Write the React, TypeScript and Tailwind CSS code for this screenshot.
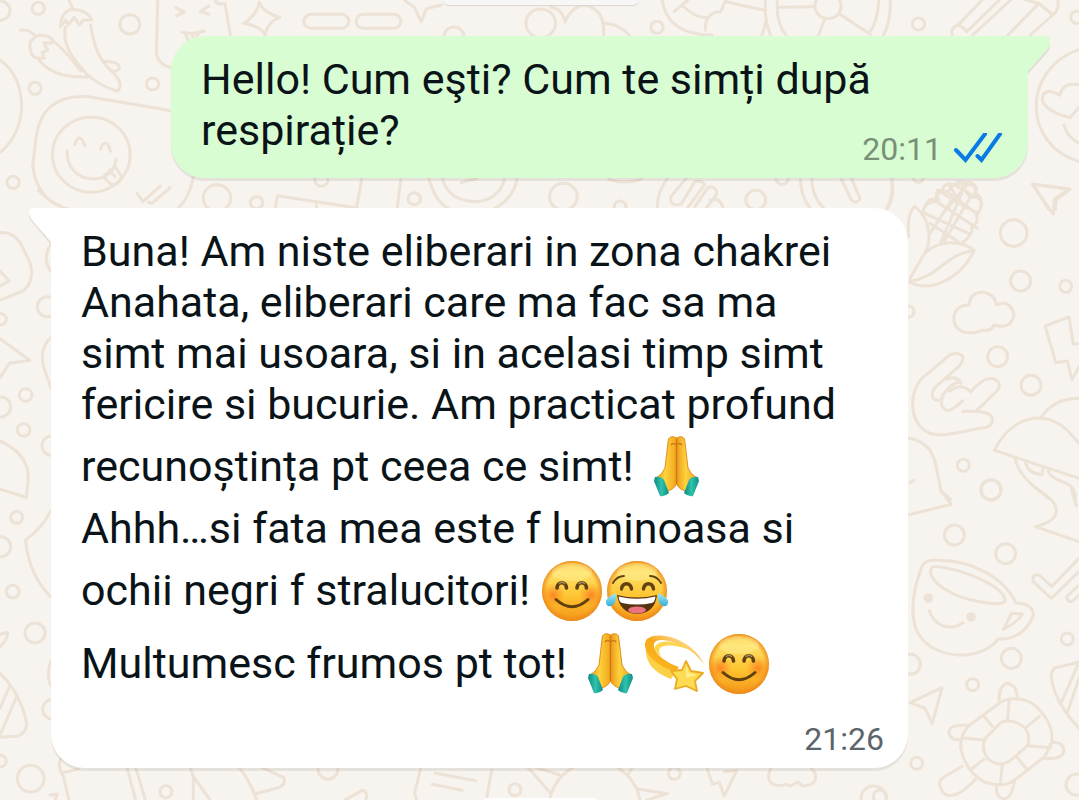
import type { ReactNode } from "react";

type EmojiProps = { label: string; children: ReactNode };

function Emoji({ label, children }: EmojiProps) {
  return (
    <svg role="img" aria-label={label} viewBox="0 0 65 62" className="inline-block h-[62px] w-[65px] align-[-17px]">
      {children}
    </svg>
  );
}

function Gradients() {
  return (
    <svg aria-hidden="true" className="absolute h-0 w-0">
      <defs>
        <linearGradient id="face" x1="0" y1="0" x2="0" y2="1">
          <stop offset="0" stopColor="#fbc63c" />
          <stop offset="0.2" stopColor="#fee168" />
          <stop offset="0.6" stopColor="#fdc32f" />
          <stop offset="1" stopColor="#f49518" />
        </linearGradient>
        <radialGradient id="rim">
          <stop offset="0.82" stopColor="#ee8a1c" stopOpacity="0" />
          <stop offset="1" stopColor="#ea861f" stopOpacity="0.85" />
        </radialGradient>
        <radialGradient id="blush">
          <stop offset="0" stopColor="#fb6b1c" stopOpacity="0.7" />
          <stop offset="1" stopColor="#fb7d1c" stopOpacity="0" />
        </radialGradient>
        <linearGradient id="hand" x1="0" y1="0" x2="1" y2="0">
          <stop offset="0" stopColor="#ee981c" />
          <stop offset="0.45" stopColor="#fdd33c" />
          <stop offset="1" stopColor="#f2a51c" />
        </linearGradient>
        <linearGradient id="cuff" x1="0" y1="0" x2="1" y2="0">
          <stop offset="0" stopColor="#0b8a83" />
          <stop offset="0.5" stopColor="#31c2ac" />
          <stop offset="1" stopColor="#0d8d86" />
        </linearGradient>
        <linearGradient id="trail" x1="0" y1="1" x2="1" y2="0">
          <stop offset="0" stopColor="#fbbb1e" />
          <stop offset="0.5" stopColor="#f8a91b" />
          <stop offset="1" stopColor="#fbd787" stopOpacity="0.4" />
        </linearGradient>
        <linearGradient id="tear" x1="0" y1="0" x2="0" y2="1">
          <stop offset="0" stopColor="#a8e8f4" />
          <stop offset="1" stopColor="#35afd9" />
        </linearGradient>
      </defs>
    </svg>
  );
}

function Face() {
  return (
    <>
      <circle cx="31" cy="31" r="30" fill="url(#face)" />
      <circle cx="31" cy="31" r="30" fill="url(#rim)" />
      <ellipse cx="31" cy="12" rx="20" ry="9" fill="#fff3a5" opacity="0.35" />
    </>
  );
}

function Smile() {
  return (
    <Emoji label="😊">
      <Face />
      <circle cx="12" cy="35" r="12" fill="url(#blush)" />
      <circle cx="50" cy="35" r="12" fill="url(#blush)" />
      <g fill="none" stroke="#614010" strokeLinecap="round">
        <path d="M16 28C16.500 21 25 21 25.500 28M36 28C36.500 21 45 21 45.500 28" strokeWidth="3.600" />
        <path d="M15 39.500Q31 54 47 39.500" strokeWidth="3" />
      </g>
      <path d="M18 24Q21 20.500 24 24M37.500 24Q41 20.500 44 24" fill="none" stroke="#a58b60" strokeWidth="1.500" />
    </Emoji>
  );
}

function Joy() {
  return (
    <Emoji label="😂">
      <Face />
      <g fill="none" stroke="#634211" strokeLinecap="round">
        <path d="M15.500 29C16.500 22 24.500 22 25.500 29M37.500 29C38.500 22 46.500 22 47.500 29" strokeWidth="3.400" />
        <path d="M7 23Q11 16 18 16M44 16Q51 16 55 23" strokeWidth="1.900" />
      </g>
      <path d="M11 35Q31 40 51 35Q49 53 31 54Q14 53 11 35Z" fill="#54330e" />
      <path d="M12.500 36.500Q31 41 49.500 36.500Q49 42 46 43Q31 46 16 43Q13 42 12.500 36.500Z" fill="#fff" />
      <ellipse cx="31" cy="50" rx="9" ry="3.500" fill="#ec7281" />
      <path d="M10 33Q11 44 5 46Q0 47 0 42Q0 37 10 33Z" fill="url(#tear)" />
      <path d="M52 33Q51 44 57 46Q62 47 62 42Q62 37 52 33Z" fill="url(#tear)" />
    </Emoji>
  );
}

function Pray() {
  return (
    <Emoji label="🙏">
      <path d="M32.500 2Q27 -1 24.500 3C23 14 22 24 21 32Q18 39 12 42L20 56Q30 54 32.500 48Z" fill="url(#hand)" stroke="#e08c1b" strokeWidth="1" />
      <path d="M32.500 2Q38 -1 40.500 3C42 14 43 24 44 32Q47 39 53 42L45 56Q35 54 32.500 48Z" fill="url(#hand)" stroke="#e08c1b" strokeWidth="1" />
      <path d="M32.500 3V48M27 9Q29 6 32.500 9Q36 6 38 9" fill="none" stroke="#ce7814" strokeWidth="1.500" />
      <path d="M11 41Q17 40 20 44L25 57Q21 61 16 60L10 45Z" fill="url(#cuff)" />
      <path d="M54 41Q48 40 45 44L40 57Q44 61 49 60L55 45Z" fill="url(#cuff)" />
    </Emoji>
  );
}

function Dizzy() {
  return (
    <Emoji label="💫">
      <path d="M28 46C10 39 2 29 3 15C7 22 15 31 32 40Z" fill="#fcd046" />
      <path d="M32 39C8 31 -3 14 4 6C15 -3 49 6 61 31C46 11 19 3 12 9C7 15 18 28 36 34Z" fill="url(#trail)" />
      <path d="M13 12C20 5 39 9 50 18C38 13 22 10 17 15Q15 18 18 23Q9 17 13 12Z" fill="#fbd54e" />
      <path d="M43 28L48 38L60 40L52 48L54 58L43 53L32 56L34 46L28 38L39 37Z" fill="#fddc54" stroke="#eda921" strokeWidth="1.800" strokeLinejoin="round" />
      <path d="M43 32L46 40L54 42L43 45Z" fill="#fff09a" opacity="0.8" />
    </Emoji>
  );
}

function Doodles() {
  return (
    <svg aria-hidden="true" className="absolute inset-0 h-full w-full fill-none stroke-[#ede2d6] stroke-3 *:[&_*]:[vector-effect:non-scaling-stroke]" strokeLinecap="round" strokeLinejoin="round">
      {/* Top left: peppers, popsicle, sparkles and a winking bubble */}
      <g transform="scale(.3444 .3333)">
        <g>
          <circle cx="0" cy="32" r="29" /><circle cx="111" cy="25" r="18" /><circle cx="377" cy="73" r="29" />
          <circle cx="102" cy="265" r="18" /><circle cx="443" cy="252" r="18" /><circle cx="38" cy="547" r="18" />
          <circle cx="630" cy="594" r="40" /><circle cx="745" cy="608" r="18" /><circle cx="1203" cy="596" r="18" />
          <circle cx="933" cy="540" r="19" /><circle cx="1318" cy="110" r="29" /><circle cx="1570" cy="70" r="43" />
          <path d="M60 91Q82 86 103 108M200 0L213 29M89 151Q78 119 115 105Q160 109 150 130L127 128L139 150L122 157L128 174L112 175Q90 170 89 151ZM112 178Q155 238 263 230M154 122Q190 152 235 213" />
          <path d="M175 80Q179 32 211 28Q257 32 266 60L241 61L231 75L215 52L198 75L191 61ZM190 82C178 132 213 180 258 229Q298 260 341 274Q361 250 326 216C278 173 271 118 263 75M304 184Q342 185 347 201Q344 217 326 212" />
          <path d="M458 0L454 162Q463 199 505 204M624 0Q629 16 653 10L669 105M511 23L535 37L513 47M606 18L582 34L607 43M528 97Q560 105 593 93M539 102L545 120M560 102V112M577 100L570 114" />
          <path d="M753 7Q765 39 813 52Q777 64 770 105Q755 77 707 70Q745 47 753 7ZM1176 2L1203 22L1223 65L1239 26L1282 15" />
          <rect x="882" y="43" width="131" height="42" rx="21" /><rect x="1034" y="43" width="130" height="42" rx="21" />
          <path d="M0 180Q63 228 63 322Q59 405 0 458M498 332L258 290Q123 280 105 410L95 500Q110 607 202 628M561 530Q552 590 515 628" />
          <circle cx="265" cy="464" r="113" />
          <path d="M217 434Q230 392 247 438M291 448Q308 407 321 454M195 453C190 555 332 565 336 477M300 531L333 498L353 530Q343 560 321 552ZM318 511L334 530M398 580L415 605L466 558M430 607L441 610L494 563" />
          <path d="M799 628L806 587L1038 624M919 614V628M1050 537L1036 620M1164 535L1153 628M1245 535Q1263 605 1306 628M1502 535Q1490 598 1432 628M1285 535C1300 625 1450 630 1465 535M1339 548L1385 535" />
        </g>
      </g>
      {/* Top right: heart, pizza wheel, pencil, loving face */}
      <g transform="translate(540) scale(.3441 .3333)">
        <g>
          <path d="M30 22Q63 23 73 66Q90 20 132 15Q190 30 185 105M190 70Q231 74 260 105M355 0Q370 105 500 105M390 35L430 0M415 18Q455 55 480 52M540 0L525 35Q480 35 480 90M540 5L650 30M658 60L645 105M655 0Q652 65 670 105M690 0Q685 70 715 105M1018 0Q1020 65 998 105M985 0Q980 70 955 100M690 22L796 20M828 55L810 105M870 42L960 103" />
          <circle cx="837" cy="18" r="38" /><circle cx="340" cy="82" r="18" /><circle cx="1100" cy="72" r="18" /><circle cx="1560" cy="52" r="18" />
          <path d="M1198 105Q1190 85 1215 75L1285 0M1215 75Q1230 80 1240 95L1335 0M1258 105L1368 0M1360 105L1450 10L1490 45L1425 105M1412 0L1450 10M1505 0Q1510 30 1490 45" />
          <path d="M1568 148C1400 205 1400 435 1568 485M1540 353C1490 340 1450 315 1462 285Q1475 264 1510 286Q1520 245 1568 255M1522 375Q1535 415 1568 430M1540 353L1568 320" />
          <circle cx="68" cy="590" r="40" /><circle cx="233" cy="620" r="17" /><circle cx="627" cy="600" r="29" /><circle cx="704" cy="535" r="18" /><circle cx="1099" cy="532" r="15" />
          <path d="M200 538Q250 555 295 537M370 535Q337 585 342 625M425 535L380 590Q375 620 410 613L450 545Q475 540 478 555L430 622M450 620L490 560Q517 560 512 585L485 622M495 600Q520 590 532 622M757 535Q757 590 785 625M790 535Q790 590 825 625M1022 535Q1032 590 1010 625M875 535L905 600Q920 615 930 595L905 535M1432 552L1540 568L1500 600L1498 628M1432 552L1478 628" />
          <path d="M1120 615Q1130 590 1160 600Q1140 570 1170 570Q1175 545 1205 555Q1220 535 1240 553Q1275 555 1265 580Q1290 590 1280 625M1155 570L1240 625M1205 555L1265 590M1240 555L1185 625M1210 590L1190 555" />
        </g>
      </g>
      {/* Right: corn, cloud, hand sign, lightning and mushroom */}
      <g transform="translate(880 180) scale(.3333)">
        <g>
          <circle cx="401" cy="159" r="40" /><circle cx="422" cy="303" r="30" /><circle cx="557" cy="319" r="18" /><circle cx="85" cy="395" r="17" />
          <circle cx="353" cy="530" r="30" /><circle cx="453" cy="616" r="30" /><circle cx="250" cy="856" r="18" /><circle cx="333" cy="929" r="30" />
          <path d="M457 13L567 27L523 58L520 103ZM36 0Q38 55 20 88M104 79Q80 100 86 170M104 79C151 115 157 180 134 220L90 295M134 220C175 180 240 178 283 211C245 290 160 340 90 308M90 304C180 290 190 225 283 211" />
          <path d="M128 98Q134 65 165 65Q170 30 204 35Q222 3 245 13Q275-5 290 25Q287 48 270 53Q302 45 305 75Q300 98 288 100Q300 125 275 143Q282 160 248 188M170 65L292 145M205 38L293 103M128 97L265 160M149 130L235 185M245 13L270 53M245 40L182 188M225 45L150 160M270 53L190 188" />
          <path d="M267 374Q271 338 308 336Q342 340 350 374Q390 358 402 402Q396 450 342 435Q332 456 306 450Q296 458 275 458C210 465 207 385 251 377Z" />
          <path d="M125 596L204 529Q230 510 249 530Q250 550 230 565L162 625Q150 650 165 660Q188 665 187 647L210 620Q239 600 243 610Q230 585 200 598M187 652Q178 680 199 691Q214 696 248 662M210 634Q240 606 272 635Q309 593 337 596Q367 604 354 630L287 694H249M287 694Q341 697 337 722Q333 745 303 744C188 769 155 774 126 745C87 705 90 638 125 596" />
          <path d="M597 492H580L567 411L495 438L528 548L562 543L576 599L597 560M343 811C397 705 494 690 559 748L597 790M343 811L597 895M480 717Q520 655 597 655M406 836Q410 873 460 918L510 958M437 850Q445 880 486 884L489 863M504 870Q506 890 545 904Q588 918 587 958M87 775Q154 785 168 858L183 932L212 958M90 908L102 901" />
        </g>
      </g>
      {/* Lower right: smiling cup, plane and turtle */}
      <g transform="translate(880 490) scale(.3333)">
        <g>
          <circle cx="333" cy="0" r="30" /><circle cx="223" cy="135" r="30" /><circle cx="377" cy="191" r="30" /><circle cx="562" cy="447" r="18" /><circle cx="394" cy="505" r="30" />
          <circle cx="91" cy="523" r="30" /><circle cx="278" cy="584" r="18" /><circle cx="110" cy="820" r="18" /><circle cx="590" cy="884" r="32" /><circle cx="0" cy="920" r="20" />
          <path d="M88 74L214 43L181 0M474 0C545 40 552 90 466 110L597 155M575 0L589 48M597 205L515 290L478 255Q455 250 460 275L514 325L597 245M597 285L560 320Q565 345 582 330L597 315" />
          <path d="M122 240Q130 210 160 211C275 205 375 267 408 339Q459 340 460 376Q430 450 355 447C303 514 170 510 121 440C87 395 95 315 122 240ZM153 235Q158 225 207 236C295 255 377 300 375 333C370 352 250 336 188 293Q145 263 153 235ZM370 418L395 370L427 372Q415 395 370 418ZM148 362C162 405 205 427 249 398" />
          <circle cx="145" cy="324" r="10" className="fill-[#ede2d6]" /><circle cx="273" cy="381" r="10" className="fill-[#ede2d6]" />
          <path d="M90 638L186 593L157 700L134 654ZM597 517L523 534Q511 550 514 565Q525 638 597 715M597 517L545 635M597 565L561 670" />
          <path d="M388 627C445 620 473 650 491 675Q520 710 515 755Q504 785 492 802L403 871Q370 895 313 876Q257 845 242 775Q241 733 266 708L357 640Q370 630 388 627ZM363 697Q398 685 434 712Q454 740 442 768L388 814Q355 833 324 807Q302 777 315 746ZM388 628L383 687M478 680L442 709M513 773L448 768M440 837L412 803M361 885L367 824M275 837L311 808M247 744L307 749M313 680L337 709M357 630Q358 582 385 580Q414 590 411 626M520 757Q552 758 552 785Q544 811 493 804M263 706Q205 702 207 730Q215 755 245 747M246 829L191 862Q165 880 195 913Q230 930 286 868M350 890Q345 920 372 927Q396 924 403 875" />
        </g>
      </g>
      {/* Left edge */}
      <g transform="translate(0 190) scale(.3333)">
        <g>
          <path d="M115 0Q165 55 240 65M0 128Q45 125 68 172L91 220Q105 273 69 303L0 330M0 243L28 273L0 288M153 162Q125 205 153 245M0 446L89 511L28 520L0 563M153 443Q115 475 132 535L153 595M0 753Q92 795 84 875L79 922L0 898" />
          <circle cx="142" cy="350" r="30" /><circle cx="2" cy="388" r="17" /><circle cx="77" cy="615" r="19" /><circle cx="2" cy="651" r="30" /><circle cx="71" cy="720" r="19" /><circle cx="155" cy="767" r="29" />
        </g>
      </g>
      <g transform="translate(0 490) scale(.3333)">
        <g>
          <circle cx="50" cy="82" r="18" /><circle cx="2" cy="170" r="30" /><circle cx="38" cy="305" r="19" /><circle cx="105" cy="429" r="30" /><circle cx="157" cy="658" r="29" /><circle cx="2" cy="813" r="17" /><circle cx="92" cy="866" r="40" />
          <path d="M153 62Q125 117 77 149Q84 250 153 322M0 433L23 427Q25 448 0 470M0 550Q62 610 80 700Q80 728 55 738L0 742M28 590L0 655M49 622L0 735M153 512Q137 555 153 588" />
        </g>
      </g>
      {/* Bottom strip */}
      <g transform="translate(50 750) scale(.3333)">
        <g>
          <path d="M34 20Q20 50 40 78L57 150M40 68L85 57M232 55L257 150M258 55L286 150M420 50L430 80V150M430 80L480 150M565 50Q600 90 620 150M615 132L685 113Q708 105 702 83L635 52M0 135L22 133L15 150M885 150L935 122Q955 120 948 150M1112 55L1094 130L1100 150M1155 69L1277 92M1147 103L1237 121" />
          <circle cx="348" cy="125" r="18" /><circle cx="834" cy="57" r="30" />
        </g>
      </g>
      <g transform="translate(470 750) scale(.3333)">
        <g>
          <path d="M65 60L49 150M170 48L238 125M190 50L270 75M238 150Q255 80 315 50M440 50Q500 90 510 150M485 55L474 75M503 117L593 131L530 150M710 50L727 103L748 97L763 138L800 62L763 65M905 50C880 95 910 115 947 103L962 108L983 96L998 108Q1050 105 1033 65L1020 50" />
          <circle cx="135" cy="119" r="18" /><circle cx="613" cy="70" r="18" /><circle cx="1211" cy="146" r="38" />
        </g>
      </g>
    </svg>
  );
}

const bubble = "relative w-full max-w-[857px] rounded-[34px] pt-[18px] pb-[13px] pl-[30px] pr-6 shadow-[0_3px_0_rgba(80,70,60,0.1)]";

export default function App() {
  return (
    <main className="relative flex min-h-screen flex-col overflow-hidden bg-[#f7f3ee] font-[Roboto,sans-serif] text-[43px] leading-[51px] text-[#0a1418]">
      <Gradients />
      <Doodles />
      <div className="relative ml-[444px] h-[5px] w-[194px] rounded-b-full bg-[#f7f7f6] shadow-[0_1px_1px_#dad6d1]" />

      <div className="relative mt-[31px] flex flex-col gap-[30px] px-[51px]">
        <article className={`${bubble} self-end rounded-tr-none bg-[#d8fdd2]`}>
          <svg aria-hidden="true" viewBox="0 0 22 39" className="absolute top-0 left-full h-[39px] w-[22px]">
            <path d="M0 3H17Q22 3 22 8V11Q22 13 19 17L0 38Z" fill="#e3ded8" />
            <path d="M0 0H17Q22 0 22 5V8Q22 10 19 14L0 35Z" fill="#d8fdd2" />
          </svg>
          <p>
            Hello! Cum eşti? Cum te simți după
            <br />
            respirație?
          </p>
          <footer className="-mt-[23px] flex items-center justify-end gap-3 text-[32px] leading-8 text-[#799078]">
            <time>20:11</time>
            <svg role="img" aria-label="Read" viewBox="0 0 50 32" className="h-8 w-[50px] fill-none stroke-[#087ce4] stroke-4" strokeLinecap="round">
              <path d="M2 17L11.500 27L31 1M23.500 23L27.500 27L46 1" />
            </svg>
          </footer>
        </article>

        <article className={`${bubble} rounded-tl-none bg-white`}>
          <svg aria-hidden="true" viewBox="0 0 22 39" className="absolute top-0 right-full h-[39px] w-[22px]">
            <path d="M22 3H5Q0 3 0 8Q0 10 3 14L22 37Z" fill="#e3ded8" />
            <path d="M22 0H5Q0 0 0 5Q0 8 3 12L22 34Z" fill="#fff" />
          </svg>
          <p>
            Buna! Am niste eliberari in zona chakrei
            <br />
            Anahata, eliberari care ma fac sa ma
            <br />
            simt mai usoara, si in acelasi timp simt
            <br />
            fericire si bucurie. Am practicat profund
          </p>
          <p className="leading-[73px]">
            recunoștința pt ceea ce simt! <Pray />
          </p>
          <p>Ahhh…si fata mea este f luminoasa si</p>
          <p className="leading-[73px]">
            ochii negri f stralucitori! <Smile /><Joy />
          </p>
          <p className="leading-[73px]">
            Multumesc frumos pt tot! <Pray /><Dizzy /><Smile />
          </p>
          <footer className="mt-[23px] text-right text-[32px] leading-8 text-[#5b656b]">
            <time>21:26</time>
          </footer>
        </article>
      </div>

      <div className="relative mt-[30px] ml-[484px] h-[2px] w-[112px] rounded-t-full bg-white" />
    </main>
  );
}
